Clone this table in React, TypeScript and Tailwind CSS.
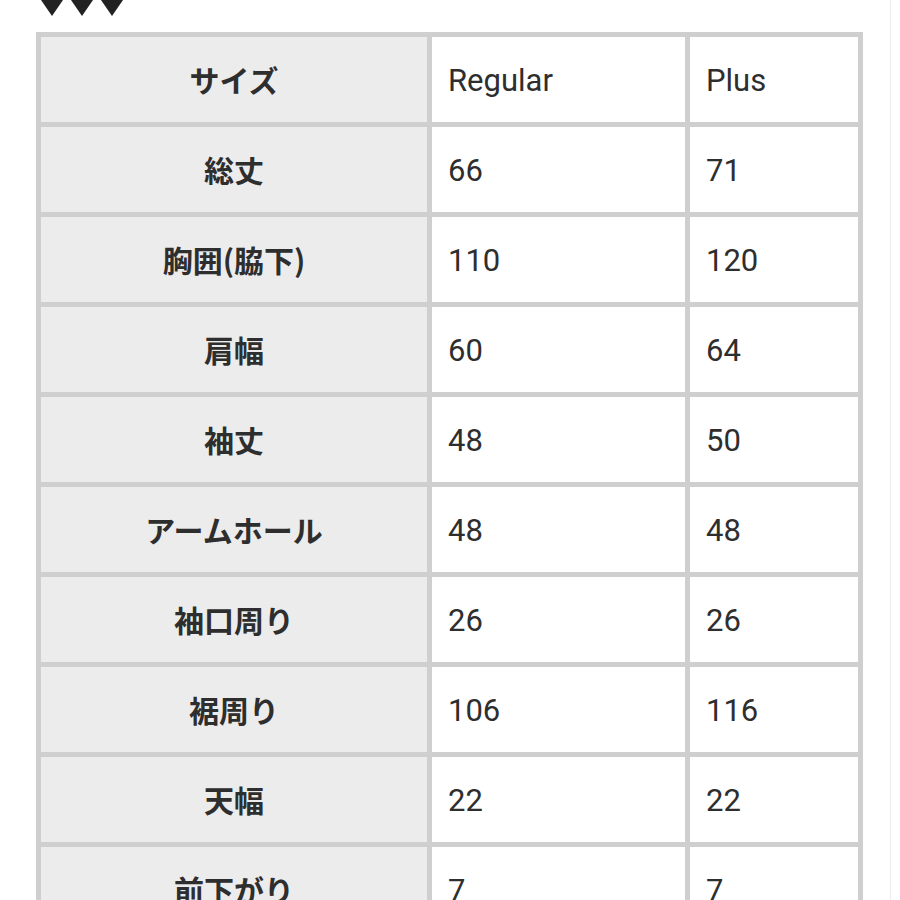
const rows: [string, string, string][] = [
  ['サイズ', 'Regular', 'Plus'],
  ['総丈', '66', '71'],
  ['胸囲(脇下)', '110', '120'],
  ['肩幅', '60', '64'],
  ['袖丈', '48', '50'],
  ['アームホール', '48', '48'],
  ['袖口周り', '26', '26'],
  ['裾周り', '106', '116'],
  ['天幅', '22', '22'],
  ['前下がり', '7', '7'],
]

function Marks() {
  return (
    <svg width="90" height="17" viewBox="0 0 90 17" className="block">
      <path d="M0 0 L22 0 L11 16 Z" fill="#222" />
      <path d="M30 0 L52 0 L41 16 Z" fill="#222" />
      <path d="M60 0 L82 0 L71 16 Z" fill="#222" />
    </svg>
  )
}

export default function App() {
  return (
    <div className="relative h-[900px] w-[900px] overflow-hidden bg-white">
      <div className="absolute top-0 left-[41px]">
        <Marks />
      </div>
      <div className="absolute top-0 right-[9px] h-full w-px bg-[#ececec]" />
      <div className="pt-8 pl-9">
        <div className="grid w-[827px] grid-cols-[386px_253px_168px] auto-rows-[85px] gap-[5px] bg-[#cfcfcf] p-[5px]">
          {rows.map(([label, regular, plus]) => (
            <div key={label} className="contents">
              <div className="flex items-center justify-center bg-[#ececec] font-['Noto_Sans_CJK_JP',sans-serif] text-[30px] font-bold text-[#2e2e2e]">
                {label}
              </div>
              <div className="flex items-center bg-white pt-[3px] pl-4 font-['Roboto','Noto_Sans_CJK_JP',sans-serif] text-[31px] text-[#2e2e2e]">
                {regular}
              </div>
              <div className="flex items-center bg-white pt-[3px] pl-4 font-['Roboto','Noto_Sans_CJK_JP',sans-serif] text-[31px] text-[#2e2e2e]">
                {plus}
              </div>
            </div>
          ))}
        </div>
      </div>
    </div>
  )
}
